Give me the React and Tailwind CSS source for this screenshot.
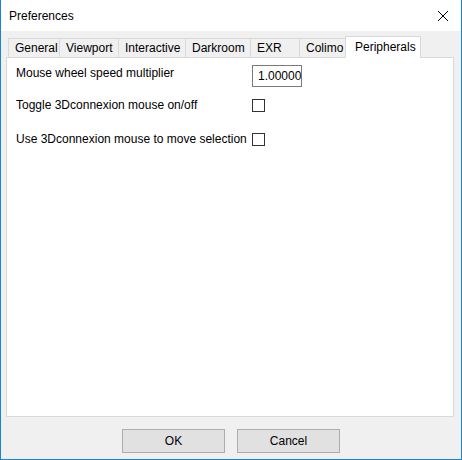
const TABS = [
  { label: "General", w: 51 },
  { label: "Viewport", w: 59 },
  { label: "Interactive", w: 67 },
  { label: "Darkroom", w: 65 },
  { label: "EXR", w: 49 },
  { label: "Colimo", w: 48 },
];

function CloseIcon() {
  return (
    <svg width="12" height="12" viewBox="0 0 12 12" className="block">
      <path d="M1 1 L11 11 M11 1 L1 11" stroke="#000" strokeWidth="1" fill="none" />
    </svg>
  );
}

function Checkbox() {
  return <div className="h-[13px] w-[13px] border border-[#333333] bg-white" />;
}

export default function App() {
  return (
    <div
      className="flex h-[460px] w-[462px] flex-col border-x border-b border-[#1883d7] bg-[#f0f0f0] text-[12px] text-black"
      style={{ fontFamily: '"Liberation Sans", Arial, sans-serif' }}
    >
      {/* title bar */}
      <div className="flex h-[31px] items-center justify-between bg-white pl-[8px] pr-[12px]">
        <span className="text-[12px]">Preferences</span>
        <CloseIcon />
      </div>

      <div className="flex flex-1 flex-col pl-[5px] pr-[7px] pt-[5px]">
        {/* tabs */}
        <div className="relative z-10 flex h-[21px] items-end pl-[2px]">
          {TABS.map((t) => (
            <div
              key={t.label}
              style={{ width: t.w }}
              className="flex h-[19px] items-center whitespace-nowrap border-l border-t border-[#d9d9d9] bg-[#f0f0f0] pl-[6px] leading-none"
            >
              {t.label}
            </div>
          ))}
          <div className="-mb-px -ml-[2px] flex h-[22px] w-[76px] items-start whitespace-nowrap border-x border-t border-[#d9d9d9] bg-white pl-[9px] pt-[4px] leading-none">
            Peripherals
          </div>
        </div>

        {/* panel */}
        <div className="h-[360px] border border-[#d9d9d9] bg-white pl-[9px]">
          <div className="flex h-[30px] items-start pt-[7px]">
            <span className="w-[236px] whitespace-nowrap leading-[16px]">Mouse wheel speed multiplier</span>
            <div className="h-[22px] w-[50px] overflow-hidden whitespace-nowrap border border-[#7a7a7a] pl-[5px] pt-[2px] leading-[16px]">
              1.000000
            </div>
          </div>
          <div className="flex h-[34px] items-center">
            <span className="w-[236px] whitespace-nowrap leading-[16px]">Toggle 3Dconnexion mouse on/off</span>
            <Checkbox />
          </div>
          <div className="flex h-[34px] items-center">
            <span className="w-[236px] whitespace-nowrap leading-[16px]">Use 3Dconnexion mouse to move selection</span>
            <Checkbox />
          </div>
        </div>

        {/* buttons */}
        <div className="flex flex-1 items-start justify-center gap-[12px] pl-[2px] pt-[12px]">
          <button className="h-[24px] w-[103px] border border-[#adadad] bg-[#e1e1e1] text-[12px] leading-none">
            OK
          </button>
          <button className="h-[24px] w-[103px] border border-[#adadad] bg-[#e1e1e1] text-[12px] leading-none">
            Cancel
          </button>
        </div>
      </div>
    </div>
  );
}
